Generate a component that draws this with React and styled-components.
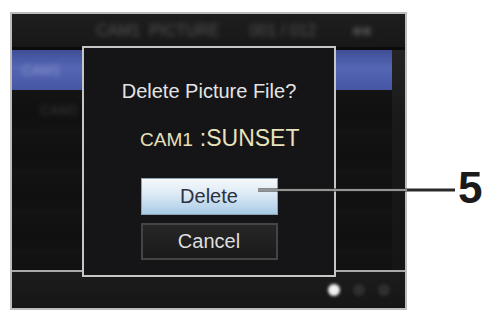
import React from 'react';
import styled, { createGlobalStyle } from 'styled-components';

const GlobalStyle = createGlobalStyle`
  html, body {
    margin: 0;
    padding: 0;
    background: #ffffff;
  }
  body {
    font-family: "Liberation Sans", Arial, Helvetica, sans-serif;
  }
`;

// Page

const Page = styled.div`
  position: relative;
  display: flex;
  align-items: flex-start;
  width: 487px;
  height: 312px;
  padding: 12px 0 0 10px;
  box-sizing: border-box;
`;

const Callout = styled.span`
  margin: 154px 0 0 51px;
  font-size: 44px;
  line-height: 44px;
  font-weight: 700;
  color: #1a1a1a;
`;

const Leader = styled.svg`
  position: absolute;
  left: 258px;
  top: 187px;
  width: 199px;
  height: 6px;
  z-index: 5;
`;

// Camera screen

const Screen = styled.div`
  position: relative;
  width: 397px;
  height: 298px;
  box-sizing: border-box;
  border: 2px solid #bdbdbd;
  background: #111111;
  display: flex;
  flex-direction: column;
`;

const Header = styled.div`
  height: 33px;
  display: flex;
  align-items: center;
  padding-left: 84px;
  gap: 30px;
  background: linear-gradient(#1e1e1e, #181818);
`;

const Blur = styled.span`
  color: ${(p) => p.$color || '#555'};
  font-size: ${(p) => p.$size || 16}px;
  filter: blur(${(p) => p.$blur || 2.5}px);
  white-space: nowrap;
  margin-left: ${(p) => p.$offset || 0}px;
`;

const Gap = styled.div`
  height: 3px;
  background: #0b0b0b;
`;

const Body = styled.div`
  height: 220px;
  display: flex;
`;

const List = styled.div`
  flex: 1;
  display: grid;
  grid-auto-rows: 40px;
`;

const Row = styled.div`
  display: flex;
  align-items: center;
  padding-left: 10px;
  background: ${(p) =>
    p.$active
      ? 'linear-gradient(#3f4e96, #5566b4 45%, #4656a4)'
      : 'linear-gradient(#141414, #101010 60%, #121212)'};
`;

const Scroll = styled.div`
  width: 13px;
  background: linear-gradient(#242424, #1a1a1a 30%, #151515);
`;

const Divider = styled.div`
  height: 2px;
  background: #a9a9a9;
`;

const Footer = styled.div`
  height: 36px;
  display: flex;
  align-items: center;
  justify-content: flex-end;
  gap: 13px;
  padding-right: 15px;
  background: linear-gradient(#1c1c1c, #161616);
`;

const Dot = styled.span`
  width: 12px;
  height: 12px;
  border-radius: 50%;
  background: ${(p) => (p.$on ? '#f2f2f2' : '#2e2e2e')};
  filter: blur(1.5px);
`;

// Dialog

const Dialog = styled.div`
  position: absolute;
  left: 70px;
  top: 32px;
  width: 254px;
  height: 231px;
  box-sizing: border-box;
  border: 2px solid #c6c6c6;
  background: #151517;
  display: flex;
  flex-direction: column;
  align-items: center;
  padding-top: 31px;
  z-index: 2;
`;

const Title = styled.div`
  font-size: 20px;
  line-height: 24px;
  color: #e4e4e4;
`;

const FileName = styled.div`
  align-self: stretch;
  padding-left: 56px;
  margin-top: 22px;
  line-height: 26px;
  color: #e8e2bc;
  white-space: nowrap;
`;

const Cam = styled.span`
  font-size: 19px;
`;

const Name = styled.span`
  font-size: 23px;
  margin-left: 7px;
`;

const Button = styled.div`
  width: 137px;
  height: 37px;
  box-sizing: border-box;
  display: flex;
  align-items: center;
  justify-content: center;
  font-size: 20px;
  margin-top: ${(p) => p.$top}px;
  ${(p) =>
    p.$selected
      ? `
    color: #2b3142;
    border: 1px solid #8fa3b5;
    background: linear-gradient(#f6f9fb, #dbe9f4 45%, #a9cbe6);
  `
      : `
    color: #dedede;
    border: 2px solid #444444;
    background: linear-gradient(#262626, #1a1a1a);
  `}
`;

const App = () => (
  <>
    <GlobalStyle />
    <Page>
      <Screen>
        <Header>
          <Blur>CAM1&nbsp; PICTURE</Blur>
          <Blur>001 / 012</Blur>
          <Blur $offset={6} $color="#4a4a4a">
            ■■
          </Blur>
        </Header>
        <Gap />
        <Body>
          <List>
            <Row $active>
              <Blur $color="#8d98cc" $size={14}>
                CAM1
              </Blur>
            </Row>
            <Row>
              <Blur $color="#3a3a3a" $size={14} $offset={18}>
                CAM1
              </Blur>
            </Row>
            <Row />
            <Row />
            <Row />
            <Row />
          </List>
          <Scroll />
        </Body>
        <Divider />
        <Footer>
          <Dot $on />
          <Dot />
          <Dot />
        </Footer>
        <Dialog>
          <Title>Delete Picture File?</Title>
          <FileName>
            <Cam>CAM1</Cam>
            <Name>:SUNSET</Name>
          </FileName>
          <Button $selected $top={24}>
            Delete
          </Button>
          <Button $top={8}>Cancel</Button>
        </Dialog>
      </Screen>
      <Callout>5</Callout>
      <Leader viewBox="0 0 199 6">
        <line x1="0" y1="3" x2="197" y2="3" stroke="#2a2a2a" strokeWidth="3" />
        <line x1="0" y1="3" x2="149" y2="3" stroke="#ffffff" strokeWidth="1" />
      </Leader>
    </Page>
  </>
);

export default App;
